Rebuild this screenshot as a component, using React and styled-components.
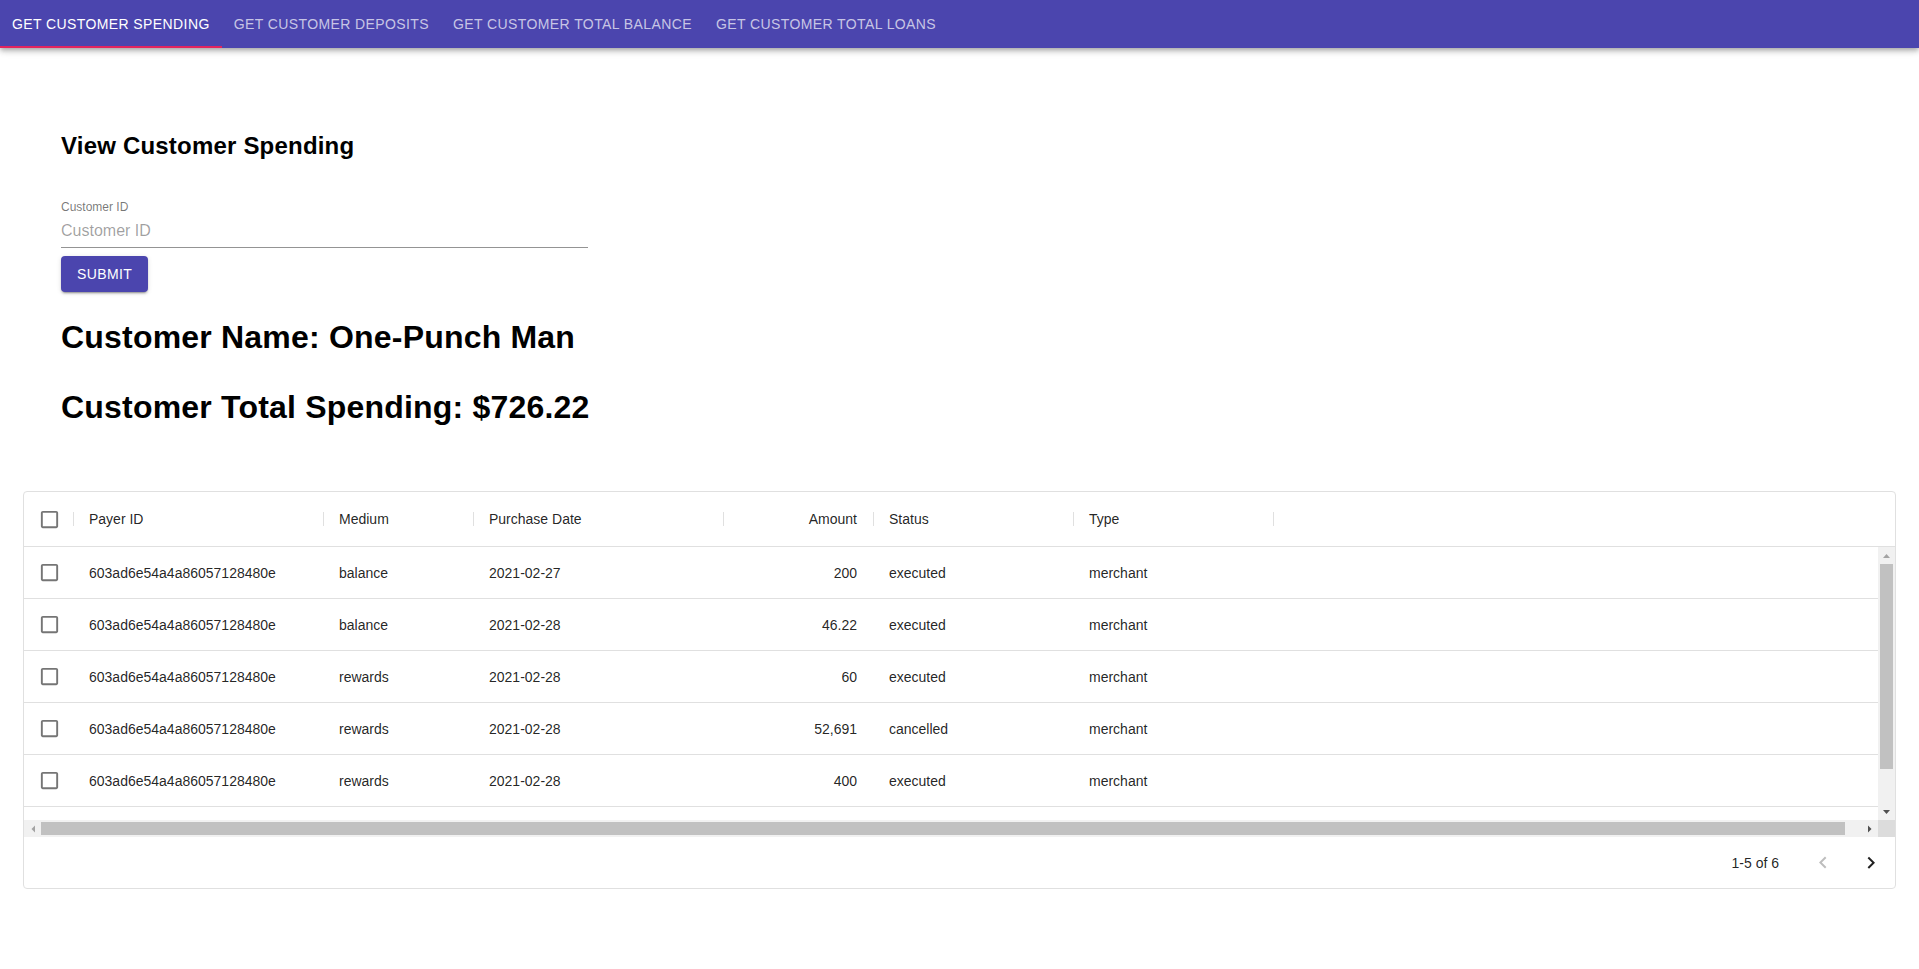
import React from 'react';
import styled, { createGlobalStyle } from 'styled-components';

const brand = '#4b45ae';
const accent = '#e3245f';
const rule = '#e0e0e0';
const ink = 'rgba(0, 0, 0, 0.87)';
const sans = '"Liberation Sans", Arial, Helvetica, sans-serif';

const GlobalStyle = createGlobalStyle`
  * { box-sizing: border-box; }
  body {
    margin: 0;
    background: #fff;
    font-family: ${sans};
    color: ${ink};
  }
`;

const AppBar = styled.header`
  position: relative;
  z-index: 1;
  display: flex;
  height: 48px;
  background: ${brand};
  box-shadow: 0 2px 4px -1px rgba(0, 0, 0, 0.2), 0 4px 5px 0 rgba(0, 0, 0, 0.14),
    0 1px 10px 0 rgba(0, 0, 0, 0.12);
`;

const Tab = styled.button`
  position: relative;
  height: 48px;
  min-width: 160px;
  padding: 6px 12px;
  border: 0;
  background: none;
  font: 400 14px/1.75 ${sans};
  letter-spacing: 0.02857em;
  text-transform: uppercase;
  white-space: nowrap;
  color: ${(p) => (p.$active ? '#fff' : 'rgba(255, 255, 255, 0.7)')};
  cursor: pointer;
  &::after {
    content: '';
    position: absolute;
    left: 0;
    right: 0;
    bottom: 0;
    height: 2px;
    background: ${(p) => (p.$active ? accent : 'transparent')};
  }
`;

const Intro = styled.section`
  padding: 0 61px;
  display: flex;
  flex-direction: column;
  align-items: flex-start;
`;

const Title = styled.h2`
  margin: 84px 0 0;
  font: bold 24px/28px ${sans};
  letter-spacing: 0.2px;
  color: #000;
`;

const Field = styled.div`
  width: 527px;
  margin-top: 39px;
  display: flex;
  flex-direction: column;
`;

const Label = styled.label`
  font-size: 12px;
  line-height: 16px;
  color: rgba(0, 0, 0, 0.54);
`;

const Input = styled.input`
  height: 33px;
  padding: 6px 0 7px;
  border: 0;
  border-bottom: 1px solid rgba(0, 0, 0, 0.42);
  outline: none;
  font: 400 16px/19px ${sans};
  color: ${ink};
  &::placeholder {
    color: rgba(0, 0, 0, 0.38);
  }
`;

const Button = styled.button`
  margin-top: 8px;
  padding: 6px 16px;
  min-width: 64px;
  border: 0;
  border-radius: 4px;
  background: ${brand};
  color: #fff;
  font: 400 14px/24px ${sans};
  letter-spacing: 0.02857em;
  text-transform: uppercase;
  box-shadow: 0 3px 1px -2px rgba(0, 0, 0, 0.2), 0 2px 2px 0 rgba(0, 0, 0, 0.14),
    0 1px 5px 0 rgba(0, 0, 0, 0.12);
  cursor: pointer;
`;

const Stat = styled.h1`
  margin: ${(p) => (p.$first ? '27px' : '33px')} 0 0;
  font: bold 32px/37px ${sans};
  letter-spacing: 0.2px;
  color: #000;
`;

const Grid = styled.div`
  margin: 65px 23px 0;
  border: 1px solid ${rule};
  border-radius: 4px;
  font-size: 14px;
  color: ${ink};
`;

const HeaderRow = styled.div`
  display: flex;
  height: 55px;
  border-bottom: 1px solid ${rule};
`;

const Cell = styled.div`
  position: relative;
  flex: 0 0 ${(p) => p.$w}px;
  min-width: 0;
  display: flex;
  align-items: center;
  justify-content: ${(p) => (p.$align === 'right' ? 'flex-end' : p.$align === 'center' ? 'center' : 'flex-start')};
  padding: ${(p) => (p.$align === 'center' ? '0' : p.$align === 'right' ? '0 17px 0 15px' : '0 15px')};
  white-space: nowrap;
  overflow: hidden;
`;

const HeadCell = styled(Cell)`
  overflow: visible;
  &::after {
    content: '';
    position: absolute;
    right: 0;
    top: 50%;
    width: 1px;
    height: 14px;
    margin-top: -7px;
    background: ${rule};
  }
`;

const Body = styled.div`
  display: flex;
  height: 273px;
`;

const Rows = styled.div`
  flex: 1;
  overflow: hidden;
`;

const Row = styled.div`
  display: flex;
  height: 52px;
  border-bottom: 1px solid ${rule};
`;

const VTrack = styled.div`
  flex: 0 0 17px;
  display: flex;
  flex-direction: column;
  background: #f1f1f1;
`;

const HBar = styled.div`
  display: flex;
  height: 17px;
  background: #f1f1f1;
`;

const Arrow = styled.div`
  flex: 0 0 17px;
  height: 17px;
  display: flex;
  align-items: center;
  justify-content: center;
  color: ${(p) => (p.$dim ? '#a3a3a3' : '#505050')};
`;

const VSpace = styled.div`
  flex: 1;
  padding: 0 2px;
`;

const VThumb = styled.div`
  height: 205px;
  background: #c1c1c1;
`;

const HSpace = styled.div`
  flex: 1;
  padding: 2px 16px 2px 0;
`;

const HThumb = styled.div`
  height: 13px;
  background: #c1c1c1;
`;

const Corner = styled.div`
  flex: 0 0 17px;
  background: #dcdcdc;
`;

const Footer = styled.div`
  display: flex;
  align-items: center;
  justify-content: flex-end;
  height: 51px;
`;

const PageInfo = styled.span`
  font-size: 14px;
  color: ${ink};
`;

const Actions = styled.div`
  display: flex;
  margin-left: 20px;
`;

const IconButton = styled.button`
  width: 48px;
  height: 48px;
  padding: 12px;
  border: 0;
  background: none;
  display: flex;
  align-items: center;
  justify-content: center;
  color: ${(p) => (p.disabled ? 'rgba(0, 0, 0, 0.26)' : 'rgba(0, 0, 0, 0.87)')};
`;

const Box = () => (
  <svg width="23" height="23" viewBox="0 0 24 24" fill="rgba(0,0,0,0.54)">
    <path d="M19 5v14H5V5h14m0-2H5c-1.1 0-2 .9-2 2v14c0 1.1.9 2 2 2h14c1.1 0 2-.9 2-2V5c0-1.1-.9-2-2-2z" />
  </svg>
);

const Tri = ({ dir }) => {
  const pts = {
    up: '0,7 3.5,3 7,7',
    down: '0,3 3.5,7 7,3',
    left: '6,1.5 2.5,5 6,8.5',
    right: '2,1.5 5.5,5 2,8.5',
  }[dir];
  return (
    <svg width="7" height="10" viewBox="0 0 7 10" fill="currentColor">
      <polygon points={pts} />
    </svg>
  );
};

const Chevron = ({ left }) => (
  <svg width="24" height="24" viewBox="0 0 24 24" fill="currentColor">
    <path
      d={
        left
          ? 'M15.41 16.09l-4.58-4.59 4.58-4.59L14 5.5l-6 6 6 6z'
          : 'M8.59 16.34l4.58-4.59-4.58-4.59L10 5.75l6 6-6 6z'
      }
    />
  </svg>
);

const tabs = [
  'Get Customer Spending',
  'Get Customer Deposits',
  'Get Customer Total Balance',
  'Get Customer Total Loans',
];

const columns = [
  { key: 'payer', title: 'Payer ID', width: 250 },
  { key: 'medium', title: 'Medium', width: 150 },
  { key: 'date', title: 'Purchase Date', width: 250 },
  { key: 'amount', title: 'Amount', width: 150, align: 'right' },
  { key: 'status', title: 'Status', width: 200 },
  { key: 'type', title: 'Type', width: 200 },
];

const payer = '603ad6e54a4a86057128480e';
const rows = [
  { payer, medium: 'balance', date: '2021-02-27', amount: '200', status: 'executed', type: 'merchant' },
  { payer, medium: 'balance', date: '2021-02-28', amount: '46.22', status: 'executed', type: 'merchant' },
  { payer, medium: 'rewards', date: '2021-02-28', amount: '60', status: 'executed', type: 'merchant' },
  { payer, medium: 'rewards', date: '2021-02-28', amount: '52,691', status: 'cancelled', type: 'merchant' },
  { payer, medium: 'rewards', date: '2021-02-28', amount: '400', status: 'executed', type: 'merchant' },
];

export default function App() {
  return (
    <>
      <GlobalStyle />
      <AppBar>
        {tabs.map((t, i) => (
          <Tab key={t} $active={i === 0}>
            {t}
          </Tab>
        ))}
      </AppBar>

      <Intro>
        <Title>View Customer Spending</Title>
        <Field>
          <Label htmlFor="cid">Customer ID</Label>
          <Input id="cid" placeholder="Customer ID" />
        </Field>
        <Button>Submit</Button>
        <Stat $first>Customer Name: One-Punch Man</Stat>
        <Stat>Customer Total Spending: $726.22</Stat>
      </Intro>

      <Grid>
        <HeaderRow>
          <HeadCell $w={50} $align="center">
            <Box />
          </HeadCell>
          {columns.map((c) => (
            <HeadCell key={c.key} $w={c.width} $align={c.align}>
              {c.title}
            </HeadCell>
          ))}
        </HeaderRow>

        <Body>
          <Rows>
            {rows.map((r, i) => (
              <Row key={i}>
                <Cell $w={50} $align="center">
                  <Box />
                </Cell>
                {columns.map((c) => (
                  <Cell key={c.key} $w={c.width} $align={c.align}>
                    {r[c.key]}
                  </Cell>
                ))}
              </Row>
            ))}
          </Rows>
          <VTrack>
            <Arrow $dim>
              <Tri dir="up" />
            </Arrow>
            <VSpace>
              <VThumb />
            </VSpace>
            <Arrow>
              <Tri dir="down" />
            </Arrow>
          </VTrack>
        </Body>

        <HBar>
          <Arrow $dim>
            <Tri dir="left" />
          </Arrow>
          <HSpace>
            <HThumb />
          </HSpace>
          <Arrow>
            <Tri dir="right" />
          </Arrow>
          <Corner />
        </HBar>

        <Footer>
          <PageInfo>1-5 of 6</PageInfo>
          <Actions>
            <IconButton disabled>
              <Chevron left />
            </IconButton>
            <IconButton>
              <Chevron />
            </IconButton>
          </Actions>
        </Footer>
      </Grid>
    </>
  );
}
